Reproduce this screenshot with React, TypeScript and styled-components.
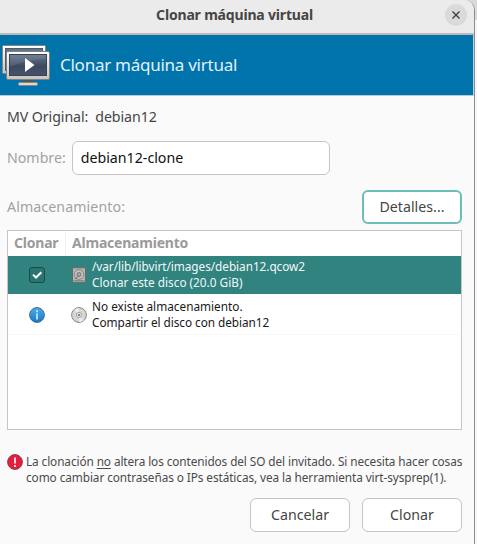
import React from 'react';
import styled, { createGlobalStyle } from 'styled-components';

const GlobalStyle = createGlobalStyle`
  * { box-sizing: border-box; }
  body {
    margin: 0;
    background: #fff;
    font-family: "Noto Sans", sans-serif;
    font-size: 14.2px;
    line-height: 20px;
    color: #454545;
    overflow: hidden;
  }
  button, input { font: inherit; color: inherit; margin: 0; }
  svg { display: block; flex: none; }
`;

const Desktop = styled.div`
  width: 477px;
  height: 544px;
  background: linear-gradient(#d9d9d9 0 20px, #f7f7f7 20px);
`;

const Dialog = styled.main`
  width: 475px;
  height: 544px;
  display: flex;
  flex-direction: column;
  background: #fafafa;
  border-right: 1px solid #8c8c8c;
  border-top-right-radius: 10px;
  overflow: hidden;
`;

const TitleBar = styled.header`
  height: 35px;
  flex: none;
  display: grid;
  grid-template-columns: 1fr 29px;
  align-items: center;
  padding: 0 0 3px;
  background: #ebebeb;
  border-bottom: 2px solid #bdb9b8;
`;

const WindowTitle = styled.h1`
  margin: 0;
  padding-left: 24px;
  text-align: center;
  font-size: 14px;
  font-weight: 700;
  line-height: 20px;
  letter-spacing: -0.18px;
`;

const CloseButton = styled.button`
  width: 22px;
  height: 22px;
  padding: 0;
  border: 0;
  border-radius: 50%;
  background: #dadada;
  display: grid;
  place-items: center;
`;

const Banner = styled.section`
  height: 61px;
  flex: none;
  display: flex;
  align-items: center;
  gap: 9px;
  padding-left: 2px;
  background: #0073ab;
  border-right: 1px solid #b9d3e0;
  border-bottom: 1px solid #bccbd3;
  color: #e3f0f6;
  font-size: 17px;
  letter-spacing: -0.26px;
`;

const Body = styled.div`
  flex: 1;
  display: flex;
  flex-direction: column;
  padding: 11px 12px 12px 7px;
`;

const Origin = styled.div`
  display: flex;
  gap: 7px;
  height: 20px;
  letter-spacing: -0.08px;
`;

const Field = styled.label`
  display: flex;
  align-items: center;
  gap: 6px;
  margin-top: 14px;
  height: 34px;
`;

const Muted = styled.span<{ $spacing?: number }>`
  color: #a3a2a1;
  letter-spacing: ${p => p.$spacing ?? 0}px;
`;

const NameInput = styled.input`
  width: 258px;
  height: 34px;
  padding: 0 8px 1px;
  border: 1px solid #c6c5c4;
  border-radius: 6px;
  background: #fff;
  color: #111;
  outline: 0;
`;

const StorageBar = styled.div`
  display: flex;
  align-items: center;
  justify-content: space-between;
  height: 34px;
  margin-top: 15px;
`;

const Button = styled.button<{ $focused?: boolean }>`
  width: 100px;
  height: 34px;
  padding: 0 0 1px;
  border: ${p => (p.$focused ? '2px solid #6cbdb8' : '1px solid #c6c5c4')};
  border-radius: 6px;
  background: #fff;
`;

const Table = styled.section`
  height: 200px;
  margin-top: 6px;
  border: 1px solid #c6c5c4;
  background: #fff;
`;

const TableHead = styled.div`
  display: grid;
  grid-template-columns: 58px 1fr;
  height: 25px;
  color: #9b9a99;
  font-size: 14px;
  font-weight: 700;
  line-height: 23px;
  letter-spacing: -0.21px;
`;

const HeadCell = styled.div<{ $divided?: boolean }>`
  padding-left: 6px;
  border-right: ${p => (p.$divided ? '1px solid #f1f1f1' : '0')};
`;

const Row = styled.div<{ $selected?: boolean }>`
  display: grid;
  grid-template-columns: 58px 26px 1fr;
  align-items: center;
  height: ${p => (p.$selected ? 38 : 41)}px;
  background: ${p => (p.$selected ? '#30837f' : '#fff')};
  color: ${p => (p.$selected ? '#f2f8f7' : '#191919')};
  border-bottom: ${p => (p.$selected ? '0' : '1px solid #f8f8f8')};
`;

const IconCell = styled.div<{ $start?: boolean; $low?: boolean }>`
  display: flex;
  justify-content: ${p => (p.$start ? 'flex-start' : 'center')};
  padding-left: ${p => (p.$start ? 5 : 0)}px;
  padding-top: ${p => (p.$low ? 2 : 0)}px;
`;

const Lines = styled.div<{ $raised?: boolean }>`
  display: flex;
  flex-direction: column;
  padding-bottom: ${p => (p.$raised ? 2 : 0)}px;
  font-size: 11.8px;
  line-height: 16px;
  white-space: nowrap;
`;

const Line = styled.span<{ $spacing?: number }>`
  letter-spacing: ${p => p.$spacing ?? 0}px;
`;

const Notice = styled.div`
  display: flex;
  align-items: flex-start;
  gap: 3px;
  margin-top: 23px;
  color: #4a4a4a;

  > svg { margin-top: 1px; }
`;

const Underlined = styled.span`
  text-decoration: underline;
  text-underline-offset: 2px;
  text-decoration-skip-ink: none;
`;

const Actions = styled.footer`
  display: flex;
  justify-content: flex-end;
  gap: 12px;
  margin-top: 13px;
`;

function MachinesIcon() {
  return (
    <svg width="49" height="44" viewBox="0 0 49 44">
      <defs>
        <linearGradient id="frame" x1="0" y1="0" x2="0" y2="1">
          <stop offset="0" stopColor="#fff" />
          <stop offset="1" stopColor="#c5c5c3" />
        </linearGradient>
        <linearGradient id="screen" x1="0" y1="0" x2="0" y2="1">
          <stop offset="0" stopColor="#68788b" />
          <stop offset=".55" stopColor="#3d4960" />
          <stop offset="1" stopColor="#46536a" />
        </linearGradient>
      </defs>
      <rect x=".5" y="2.5" width="43" height="28" rx="1" fill="url(#frame)" stroke="#858683" />
      <rect x="3.5" y="5.5" width="37" height="22" fill="#61748a" stroke="#4c5967" />
      <rect x="20" y="37" width="12" height="3" fill="#515557" />
      <rect x="16.500" y="39.500" width="19" height="3" rx="1" fill="#d8d8d5" stroke="#858683" />
      <rect x="4.500" y="8.500" width="43" height="28" rx="1.500" fill="url(#frame)" stroke="#81827e" />
      <rect x="7.500" y="11.500" width="37" height="21" fill="url(#screen)" stroke="#374254" />
      <path d="M8 12h36v3.500q-18 1-36 8z" fill="#8b98a8" opacity=".25" />
      <path d="M23 15v14l9.500-7z" fill="#fff" />
    </svg>
  );
}

function CheckIcon() {
  return (
    <svg width="16" height="16" viewBox="0 0 16 16">
      <rect x=".5" y=".5" width="15" height="15" rx="2.500" fill="#2b7571" stroke="#184b49" />
      <path d="M4 7.600 7 10.500 12.300 5.200" fill="none" stroke="#fff" strokeWidth="2" />
    </svg>
  );
}

function DiskIcon() {
  return (
    <svg width="16" height="16" viewBox="0 0 16 16">
      <rect x="1.500" y=".8" width="13" height="14.400" rx="1" fill="#b5b5b3" stroke="#686965" />
      <path d="M2.500 13.500h11" stroke="#8b8c89" />
      <circle cx="8" cy="7.500" r="4.800" fill="#c1c1bf" stroke="#858683" />
      <circle cx="8" cy="7.500" r="2" fill="#aaa" stroke="#747572" />
      <path d="m4 12 3.500-3.500" stroke="#777875" />
    </svg>
  );
}

function InfoIcon() {
  return (
    <svg width="16" height="16" viewBox="0 0 16 16">
      <defs>
        <linearGradient id="info" x1="0" y1="0" x2="0" y2="1">
          <stop offset="0" stopColor="#4aacee" />
          <stop offset="1" stopColor="#157ac8" />
        </linearGradient>
      </defs>
      <circle cx="8" cy="8" r="7.400" fill="url(#info)" stroke="#416c8e" />
      <path d="M8 3.200v2M8 6.500v6" stroke="#d9efff" strokeWidth="1.600" />
    </svg>
  );
}

function OpticalIcon() {
  return (
    <svg width="16" height="16" viewBox="0 0 16 16">
      <circle cx="8" cy="8" r="7.400" fill="#d6d6d5" stroke="#858585" />
      <path d="M8 8 3.500 2.500A7 7 0 0 1 8 1zM8 8l4.500 5.500A7 7 0 0 1 8 15z" fill="#ececec" />
      <circle cx="8" cy="8" r="2.600" fill="#e7e5df" stroke="#aaa9a5" />
      <circle cx="8" cy="8" r="1" fill="#65645d" />
    </svg>
  );
}

function AlertIcon() {
  return (
    <svg width="16" height="16" viewBox="0 0 16 16">
      <circle cx="8" cy="8" r="7.400" fill="#e11f3e" stroke="#963949" />
      <path d="M8 3.500v6M8 11v2" stroke="#fbd6dc" strokeWidth="2" />
    </svg>
  );
}

export default function App() {
  return (
    <Desktop>
      <GlobalStyle />
      <Dialog>
        <TitleBar>
          <WindowTitle>Clonar máquina virtual</WindowTitle>
          <CloseButton aria-label="Cerrar">
            <svg width="8" height="8" viewBox="0 0 8 8">
              <path d="m.5.5 7 7m0-7-7 7" stroke="#3d3d3d" strokeWidth="1.400" />
            </svg>
          </CloseButton>
        </TitleBar>
        <Banner>
          <MachinesIcon />
          <span>Clonar máquina virtual</span>
        </Banner>
        <Body>
          <Origin>
            <span>MV Original:</span>
            <span>debian12</span>
          </Origin>
          <Field>
            <Muted>Nombre:</Muted>
            <NameInput defaultValue="debian12-clone" />
          </Field>
          <StorageBar>
            <Muted $spacing={0.09}>Almacenamiento:</Muted>
            <Button $focused>Detalles...</Button>
          </StorageBar>
          <Table>
            <TableHead>
              <HeadCell $divided>Clonar</HeadCell>
              <HeadCell>Almacenamiento</HeadCell>
            </TableHead>
            <Row $selected>
              <IconCell><CheckIcon /></IconCell>
              <IconCell $start><DiskIcon /></IconCell>
              <Lines $raised>
                <Line $spacing={-0.05}>/var/lib/libvirt/images/debian12.qcow2</Line>
                <Line>Clonar este disco (20.0 GiB)</Line>
              </Lines>
            </Row>
            <Row>
              <IconCell $low><InfoIcon /></IconCell>
              <IconCell $start $low><OpticalIcon /></IconCell>
              <Lines>
                <Line>No existe almacenamiento.</Line>
                <Line $spacing={-0.06}>Compartir el disco con debian12</Line>
              </Lines>
            </Row>
          </Table>
          <Notice>
            <AlertIcon />
            <Lines>
              <Line $spacing={-0.09}>
                La clonación <Underlined>no</Underlined> altera los contenidos del SO del invitado. Si necesita hacer cosas
              </Line>
              <Line $spacing={-0.08}>
                como cambiar contraseñas o IPs estáticas, vea la herramienta virt-sysprep(1).
              </Line>
            </Lines>
          </Notice>
          <Actions>
            <Button>Cancelar</Button>
            <Button>Clonar</Button>
          </Actions>
        </Body>
      </Dialog>
    </Desktop>
  );
}
